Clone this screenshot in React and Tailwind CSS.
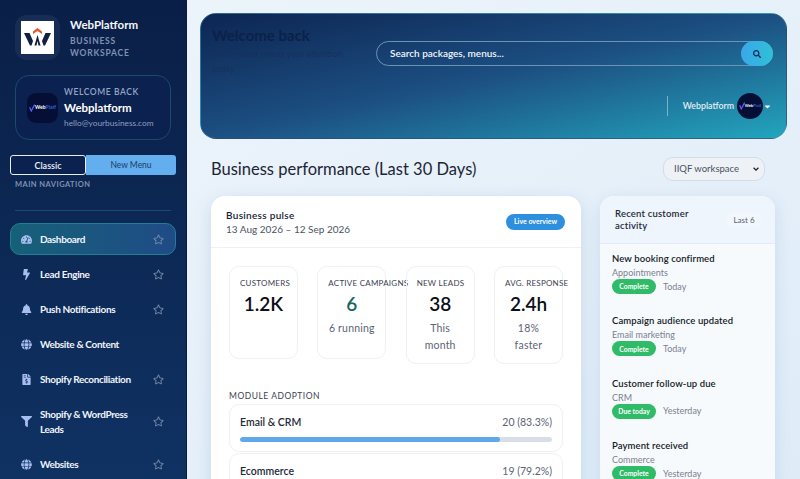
import React from "react";
import { FaTachometerAlt, FaBolt, FaBell, FaGlobe, FaFileInvoiceDollar, FaFilter, FaRegStar, FaSearch, FaCaretDown } from "react-icons/fa";

const nav = [
  { label: "Dashboard", Icon: FaTachometerAlt, star: true, active: true },
  { label: "Lead Engine", Icon: FaBolt, star: true },
  { label: "Push Notifications", Icon: FaBell, star: true },
  { label: "Website & Content", Icon: FaGlobe },
  { label: "Shopify Reconciliation", Icon: FaFileInvoiceDollar, star: true },
  { label: "Shopify & WordPress Leads", Icon: FaFilter, star: true },
  { label: "Websites", Icon: FaGlobe, star: true },
];

const stats = [
  { label: "CUSTOMERS", value: "1.2K", h: "h-[93px]" },
  { label: "ACTIVE CAMPAIGNS", value: "6", sub: "6 running", h: "h-[93px]", color: "text-[#17665f]" },
  { label: "NEW LEADS", value: "38", sub: "This month", h: "h-[98px]", center: true },
  { label: "AVG. RESPONSE", value: "2.4h", sub: "18% faster", h: "h-[98px]", center: true },
];

const activity = [
  { title: "New booking confirmed", sub: "Appointments", pill: "Complete", when: "Today" },
  { title: "Campaign audience updated", sub: "Email marketing", pill: "Complete", when: "Today" },
  { title: "Customer follow-up due", sub: "CRM", pill: "Due today", when: "Yesterday" },
  { title: "Payment received", sub: "Commerce", pill: "Complete", when: "Yesterday" },
];

function WLogo() {
  return (
    <svg viewBox="0 0 33 33" className="w-[33px] h-[33px] bg-white">
      <path d="M3 12H8.5L12 20L10.5 24.5H9Z" fill="#10213f" />
      <path d="M30 12H24.5L21 20L22.5 24.5H24Z" fill="#10213f" />
      <path d="M16.5 14L13.5 24.5H15.5L16.5 20L17.5 24.5H19.5Z" fill="#10213f" />
      <path d="M12 13V10.5L16.5 7L21 10.5V13L16.5 10Z" fill="#e4572e" />
    </svg>
  );
}

function BrandMark({ size = "w-[31px] h-[30px]", round = "rounded-[9px]", text = "text-[5px]" }) {
  return (
    <div className={`${size} ${round} bg-[#050f35] flex items-center justify-center shrink-0 overflow-hidden`}>
      <svg viewBox="0 0 8 10" className="w-[6px] h-[8px] shrink-0">
        <path d="M0.8 4L3 9L7.5 0.5" fill="none" stroke="#6a58ff" strokeWidth="1.6" />
      </svg>
      <span className={`${text} font-bold text-white leading-none`}>Web</span>
      <span className={`${text} font-bold text-[#2c63d8] leading-none`}>Platf</span>
    </div>
  );
}

export default function App() {
  return (
    <div className="h-[479px] w-[800px] overflow-hidden flex bg-gradient-to-br from-[#eef5fb] to-[#dfecf8] font-['Lato','Noto_Sans',sans-serif] text-[#111827]">
      <aside className="w-[187px] shrink-0 h-full overflow-hidden border-r border-[#0a1a48] bg-gradient-to-b from-[#0a1f47] to-[#0f3263] text-white">
        <div className="flex gap-[10px] pl-[15px] pt-[15px]">
          <div className="w-[45px] h-[45px] rounded-[12px] bg-[#182d56] flex items-center justify-center shrink-0">
            <WLogo />
          </div>
          <div className="pt-[2px]">
            <div className="text-[11.5px] font-bold leading-[15px] text-[#f3f6fb]">WebPlatform</div>
            <div className="mt-[3px] text-[8.5px] font-bold leading-[12px] tracking-[0.09em] text-[#8091b3]">BUSINESS<br />WORKSPACE</div>
          </div>
        </div>

        <div className="mx-[15px] mt-[15px] h-[65px] rounded-[14px] border border-[#1a4a6d] bg-[#0b2150] flex items-center gap-[6px] pl-[11px]">
          <BrandMark />
          <div className="min-w-0">
            <div className="text-[8.5px] font-semibold tracking-[0.07em] leading-[12px] text-[#96a6c2]">WELCOME BACK</div>
            <div className="text-[11.5px] font-bold leading-[15px] mt-[2px] text-white">Webplatform</div>
            <div className="text-[8.3px] leading-[12px] mt-[2px] text-[#8e9fbc]">hello@yourbusiness.com</div>
          </div>
        </div>

        <div className="mx-[10px] mt-[15px] flex h-[20px] text-[9px] leading-none">
          <div className="w-[76px] border-[1.5px] border-[#e8edf3] rounded-[3px] bg-[#0b2150] flex items-center justify-center font-semibold text-[#eef2f8]">Classic</div>
          <div className="flex-1 bg-[#63aeee] rounded-r-[3px] flex items-center justify-center text-[8.5px] text-[#1d3b69]">New Menu</div>
        </div>
        <div className="px-[15px] mt-[5px] text-[7.5px] font-bold tracking-[0.06em] leading-[10px] text-[#7f90b0]">MAIN NAVIGATION</div>
        <div className="mx-[15px] mt-[20px] h-px bg-[#1c4a6e]" />

        <nav className="mx-[10px] mt-[12px] flex flex-col gap-[3px]">
          {nav.map(({ label, Icon, star, active }) => (
            <div
              key={label}
              className={`flex items-center pl-[10px] pr-[11px] py-[7.5px] rounded-[10px] border ${active ? "bg-gradient-to-r from-[#166078] to-[#1f4b86] border-[#1f7f95]" : "border-transparent"}`}
            >
              <span className="w-[19px] shrink-0 flex items-center text-[#a8bdf0] text-[11px]"><Icon /></span>
              <span className="flex-1 text-[10px] font-bold leading-[15px] tracking-[-0.36px] text-[#f0f4fa] pr-[10px]">{label}</span>
              {star && <FaRegStar className="text-[11px] text-[#7688a8] shrink-0" />}
            </div>
          ))}
        </nav>
      </aside>

      <main className="flex-1 min-w-0 overflow-hidden pl-[13px] pr-[13px] pt-[13px]">
        <section className="h-[126px] rounded-[16px] bg-gradient-to-br from-[#0d2552] via-[#1c4f82] to-[#22a6bd] pl-[11px] pr-[13px] pt-[27px] border border-[#4e89a8]/40">
          <div className="flex">
            <div className="w-[164px] shrink-0 -mt-[15px]">
              <div className="text-[15px] font-bold leading-[18px] text-[#0c2149]">Welcome back</div>
              <div className="w-[140px] text-[9px] leading-[15px] mt-[2px] text-[#16305f]">Here's what needs your attention today</div>
            </div>
            <div className="flex-1 h-[25px] rounded-full border border-[#6c93b4] flex items-center justify-between pl-[13px]">
              <span className="text-[10px] font-semibold text-[#f0f5fa]">Search packages, menus...</span>
              <span className="w-[32px] h-[25px] rounded-full bg-gradient-to-r from-[#3aa7ea] to-[#2fc0d6] flex items-center justify-center text-[#0b2a55] text-[8px] -mr-px"><FaSearch /></span>
            </div>
          </div>
          <div className="flex justify-end items-center mt-[17px] pr-[1px]">
            <div className="w-px h-[20px] bg-[#7fb0c6] mr-[15px]" />
            <span className="text-[8.8px] font-semibold text-[#e4edf4] mr-[3px]">Webplatform</span>
            <BrandMark size="w-[26px] h-[26px]" round="rounded-full" text="text-[4px]" />
            <FaCaretDown className="text-[9px] text-white" />
          </div>
        </section>

        <div className="flex items-center justify-between pl-[11px] pr-[22px] mt-[17px]">
          <h1 className="text-[16.5px] leading-[26px] text-[#1c2536]">Business performance (Last 30 Days)</h1>
          <div className="w-[102px] h-[24px] rounded-[10px] border border-[#d5dce5] bg-[#eef1f5] flex items-center justify-between pl-[10px] pr-[4px] text-[9.5px] text-[#4a5261]">
            <span>IIQF workspace</span>
            <svg viewBox="0 0 10 10" className="w-[8px] h-[8px]"><path d="M2 3.5L5 6.5L8 3.5" fill="none" stroke="#1a1f29" strokeWidth="1.6" /></svg>
          </div>
        </div>

        <div className="flex items-start pl-[11px] mt-[14px] gap-[19px]">
          <section className="w-[370px] shrink-0 h-[320px] rounded-t-[14px] bg-white shadow-[0_4px_16px_rgba(60,110,170,0.18)]">
            <div className="h-[52px] border-b border-[#eef0f3] flex items-center justify-between pl-[15px] pr-[16px]">
              <div>
                <div className="text-[10px] font-semibold leading-[14px] tracking-[0.03em] text-[#1a2233]">Business pulse</div>
                <div className="text-[10px] leading-[14px] text-[#4b5563]">13 Aug 2026 – 12 Sep 2026</div>
              </div>
              <span className="w-[59px] h-[16px] rounded-full bg-[#2e8fdf] flex items-center justify-center text-[7px] font-bold text-white">Live overview</span>
            </div>

            <div className="pl-[18px] pr-[18px] pt-[18px]">
              <div className="grid grid-cols-4 gap-[19.3px] items-start">
                {stats.map((s) => (
                  <div key={s.label} className={`${s.h} rounded-[10px] border border-[#eff1f4] pt-[10px] text-center`}>
                    <div className="text-[8px] leading-[12px] tracking-[0.03em] text-[#3b4252] whitespace-nowrap pl-[10px] text-left">{s.label}</div>
                    <div className={`text-[19px] font-semibold leading-[24px] mt-[3px] ${s.color || "text-[#0b0f18]"}`}>{s.value}</div>
                    {s.sub && <div className={`text-[10.5px] leading-[16.5px] mt-[4px] tracking-[0.02em] text-[#5b6275] ${s.center ? "px-[12px]" : ""}`}>{s.sub}</div>}
                  </div>
                ))}
              </div>

              <div className="mt-[26px] text-[8.5px] leading-[12px] tracking-[0.06em] text-[#3b4252]">MODULE ADOPTION</div>
              <div className="mt-[2px] flex flex-col gap-px">
                <div className="h-[48px] rounded-[10px] border border-[#eff1f4] px-[10px] pt-[9px]">
                  <div className="flex justify-between items-center leading-[16px]">
                    <span className="text-[10.5px] font-semibold text-[#232a38]">Email &amp; CRM</span>
                    <span className="text-[10.5px] text-[#5b6275]">20 (83.3%)</span>
                  </div>
                  <div className="h-[5px] rounded-full bg-[#d9dde6] mt-[7px] overflow-hidden">
                    <div className="h-full bg-[#61a8ea] rounded-full" style={{ width: "83.3%" }} />
                  </div>
                </div>
                <div className="h-[48px] rounded-[10px] border border-[#eff1f4] px-[10px] pt-[9px]">
                  <div className="flex justify-between items-center leading-[16px]">
                    <span className="text-[10.5px] font-semibold text-[#232a38]">Ecommerce</span>
                    <span className="text-[10.5px] text-[#5b6275]">19 (79.2%)</span>
                  </div>
                </div>
              </div>
            </div>
          </section>

          <section className="w-[175px] shrink-0 h-[300px] rounded-t-[14px] overflow-hidden bg-[#f7fafd] shadow-[0_4px_16px_rgba(60,110,170,0.15)]">
            <div className="h-[48px] bg-[#eef5fd] border-b border-[#e2ebf7] flex items-center justify-between pl-[15px] pr-[13px]">
              <div className="w-[90px] text-[9.5px] font-semibold leading-[12px] tracking-[0.02em] text-[#1f2937]">Recent customer activity</div>
              <span className="w-[36px] text-center rounded-full bg-[#f2f7fd] text-[8px] leading-[14px] text-[#5b6275]">Last 6</span>
            </div>
            <div className="flex flex-col gap-[6px]">
              {activity.map((a) => (
                <div key={a.title} className="h-[56.3px] bg-[#f7fafd] pl-[12px] pt-[8px]">
                  <div className="text-[9.5px] font-semibold leading-[13px] tracking-[0.01em] text-[#141a26] whitespace-nowrap">{a.title}</div>
                  <div className="text-[9px] leading-[12px] mt-[2px] text-[#7a8190]">{a.sub}</div>
                  <div className="flex items-center gap-[7px]">
                    <span className="h-[15px] w-[44px] justify-center rounded-full bg-[#2fbb68] flex items-center text-[6.8px] font-bold text-white whitespace-nowrap">{a.pill}</span>
                    <span className="text-[9px] text-[#7a8190]">{a.when}</span>
                  </div>
                </div>
              ))}
            </div>
          </section>
        </div>
      </main>
    </div>
  );
}
